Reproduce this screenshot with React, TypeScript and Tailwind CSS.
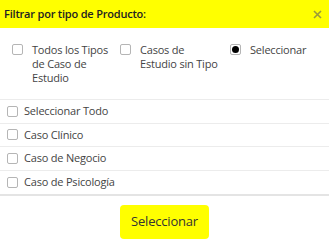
export default function App() {
  const topOptions = [
    { label: "Todos los Tipos de Caso de Estudio", kind: "check" },
    { label: "Casos de Estudio sin Tipo", kind: "check" },
    { label: "Seleccionar", kind: "radio" },
  ];
  const rows = ["Seleccionar Todo", "Caso Clínico", "Caso de Negocio", "Caso de Psicología"];

  return (
    <div
      className="w-[329px] h-[244px] bg-white text-[#333] flex flex-col"
      style={{ fontFamily: '"Open Sans", "Noto Sans", sans-serif' }}
    >
      <div className="h-[28px] bg-[#ffff00] flex items-center justify-between pl-[4px] pr-[6px] shrink-0">
        <span className="text-[11px] font-semibold tracking-[-0.2px] text-[#222]">Filtrar por tipo de Producto:</span>
        <svg width="9" height="9" viewBox="0 0 9 9" className="mr-[1px]">
          <path d="M1 1 L8 8 M8 1 L1 8" stroke="#9a9a3a" strokeWidth="1.6" />
        </svg>
      </div>

      <div className="grid grid-cols-[108px_110px_1fr] px-[12px] pt-[15px] pb-[14px] border-b border-[#ececec]">
        {topOptions.map((o) => (
          <div key={o.label} className="flex items-start gap-[9px]">
            {o.kind === "check" ? (
              <span className="mt-[1px] w-[11px] h-[11px] border border-[#b5b5b5] rounded-[2px] shrink-0" />
            ) : (
              <span className="mt-[1px] w-[11px] h-[11px] border border-[#b5b5b5] rounded-[2px] shrink-0 flex items-center justify-center">
                <span className="w-[7px] h-[7px] rounded-full bg-black" />
              </span>
            )}
            <span className="w-[79px] text-[11px] leading-[14px] tracking-[-0.2px] text-[#444]">{o.label}</span>
          </div>
        ))}
      </div>

      <div className="border-b-2 border-[#e4e4e4]">
        {rows.map((r, i) => (
          <div
            key={r}
            className={`h-[23.5px] flex items-center gap-[6px] pl-[7px] ${i < rows.length - 1 ? "border-b border-[#ececec]" : ""}`}
          >
            <span className="w-[11px] h-[11px] border border-[#b5b5b5] rounded-[2px] shrink-0" />
            <span className="text-[11px] tracking-[-0.2px] text-[#444]">{r}</span>
          </div>
        ))}
      </div>

      <div className="flex justify-center pt-[9px]">
        <button className="w-[89px] h-[34px] bg-[#ffff00] rounded-[4px] text-[13px] tracking-[-0.2px] text-[#333]">
          Seleccionar
        </button>
      </div>
    </div>
  );
}
